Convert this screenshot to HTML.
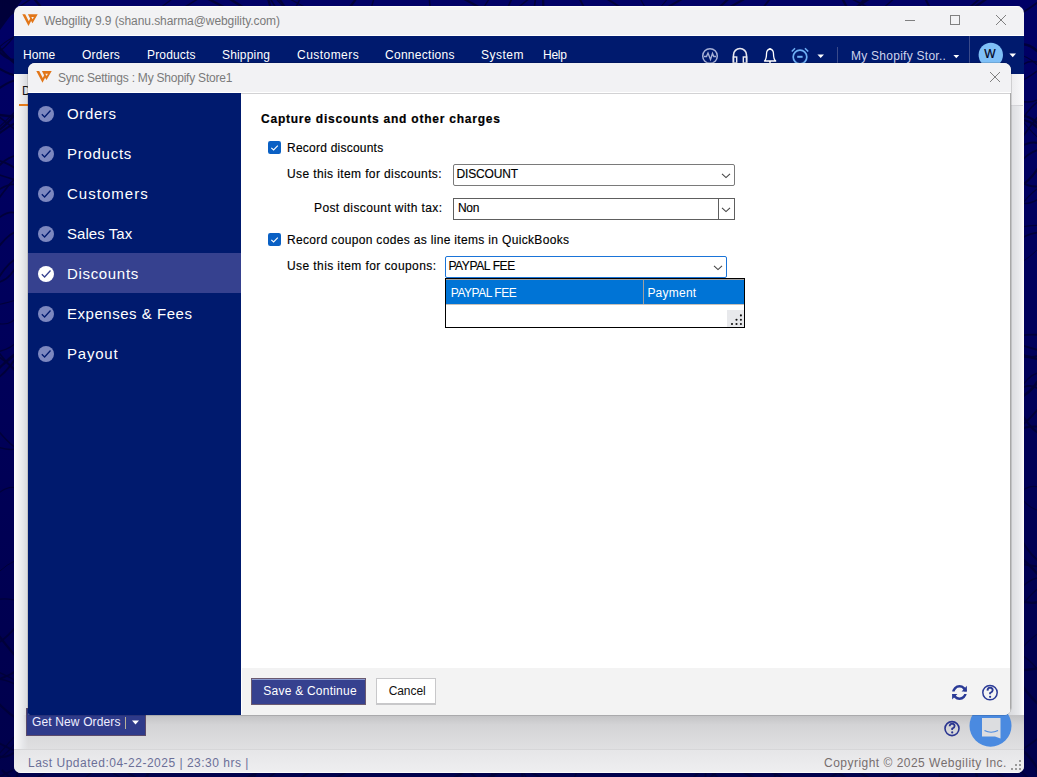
<!DOCTYPE html>
<html><head><meta charset="utf-8">
<style>
*{margin:0;padding:0;box-sizing:border-box}
html,body{width:1037px;height:777px;overflow:hidden;background:#00005c;font-family:"Liberation Sans",sans-serif}
.a{position:absolute}
.t{position:absolute;white-space:nowrap;line-height:1;font-size:12px}
.mn{color:#fff;top:48.6px}
.sb{color:#fff;font-size:15px;left:67px}
.ck{position:absolute;left:38px;width:16px;height:16px}
.lbl{color:#000;-webkit-text-stroke:0.15px #000}
</style></head><body>
<!-- background pattern -->
<svg class="a" style="left:0;top:0" width="1037" height="777">
<defs><linearGradient id="bgg" x1="0" y1="0" x2="0" y2="1"><stop offset="0" stop-color="#000066"/><stop offset="1" stop-color="#00004c"/></linearGradient></defs><rect width="1037" height="777" fill="url(#bgg)"/>
<polygon points="0,30 22,0 0,0" fill="#00003a"/>
<path d="M-5.0,251.6 Q8.5,232.6 19.0,230.7" stroke="#00003a" stroke-width="1.8" fill="none"/>
<path d="M-5.0,284.1 Q7.1,261.6 19.0,257.6" stroke="#00003a" stroke-width="1.7" fill="none"/>
<path d="M-5.0,54.3 Q6.2,48.5 19.0,29.7" stroke="#00003a" stroke-width="1.2" fill="none"/>
<path d="M-5.0,173.5 Q11.5,178.8 19.0,181.1" stroke="#00003a" stroke-width="1.6" fill="none"/>
<path d="M-5.0,758.6 Q10.6,740.7 19.0,731.3" stroke="#00003a" stroke-width="1.2" fill="none"/>
<path d="M-5.0,91.5 Q10.2,79.4 19.0,80.0" stroke="#00003a" stroke-width="1.9" fill="none"/>
<path d="M-5.0,496.4 Q7.5,483.9 19.0,488.8" stroke="#00003a" stroke-width="1.1" fill="none"/>
<path d="M-5.0,160.0 Q6.3,161.7 19.0,170.9" stroke="#00003a" stroke-width="1.9" fill="none"/>
<path d="M-5.0,352.1 Q9.9,350.1 19.0,340.1" stroke="#00003a" stroke-width="1.4" fill="none"/>
<path d="M-5.0,446.3 Q10.8,451.7 19.0,447.8" stroke="#00003a" stroke-width="1.4" fill="none"/>
<path d="M-5.0,761.6 Q6.2,755.3 19.0,738.7" stroke="#00003a" stroke-width="1.2" fill="none"/>
<path d="M-5.0,379.9 Q8.7,371.4 19.0,352.3" stroke="#00003a" stroke-width="1.9" fill="none"/>
<path d="M-5.0,680.2 Q9.0,676.5 19.0,669.1" stroke="#00003a" stroke-width="1.9" fill="none"/>
<path d="M-5.0,354.5 Q11.4,364.2 19.0,374.9" stroke="#00003a" stroke-width="2.0" fill="none"/>
<path d="M-5.0,47.1 Q8.5,63.0 19.0,59.2" stroke="#00003a" stroke-width="2.2" fill="none"/>
<path d="M-5.0,221.1 Q8.7,208.2 19.0,214.3" stroke="#00003a" stroke-width="1.7" fill="none"/>
<path d="M-5.0,130.6 Q2.6,124.5 19.0,107.6" stroke="#00003a" stroke-width="1.2" fill="none"/>
<path d="M-5.0,192.4 Q10.7,180.7 19.0,185.9" stroke="#00003a" stroke-width="1.7" fill="none"/>
<path d="M-5.0,426.9 Q10.2,445.7 19.0,449.9" stroke="#00003a" stroke-width="1.4" fill="none"/>
<path d="M-5.0,322.7 Q10.8,327.6 19.0,314.2" stroke="#00003a" stroke-width="1.2" fill="none"/>
<path d="M-5.0,136.9 Q4.3,128.6 19.0,120.8" stroke="#00003a" stroke-width="1.9" fill="none"/>
<path d="M-5.0,204.2 Q6.2,186.7 19.0,174.4" stroke="#00003a" stroke-width="1.8" fill="none"/>
<path d="M-5.0,740.6 Q7.2,748.6 19.0,752.0" stroke="#00003a" stroke-width="2.0" fill="none"/>
<path d="M-5.0,42.0 Q9.8,61.4 19.0,65.9" stroke="#00003a" stroke-width="2.2" fill="none"/>
<path d="M-5.0,304.9 Q3.0,304.5 19.0,298.8" stroke="#00003a" stroke-width="1.1" fill="none"/>
<path d="M-5.0,52.3 Q3.6,40.4 19.0,34.9" stroke="#00003a" stroke-width="1.1" fill="none"/>
<path d="M-5.0,0.2 Q3.0,-13.0 19.0,-20.7" stroke="#00003a" stroke-width="1.0" fill="none"/>
<path d="M-5.0,679.4 Q3.5,677.8 19.0,686.2" stroke="#00003a" stroke-width="1.5" fill="none"/>
<path d="M-5.0,283.0 Q10.5,281.5 19.0,260.3" stroke="#00003a" stroke-width="1.7" fill="none"/>
<path d="M-5.0,375.9 Q3.0,360.4 19.0,351.1" stroke="#00003a" stroke-width="1.4" fill="none"/>
<path d="M-5.0,644.0 Q2.2,642.9 19.0,623.7" stroke="#00003a" stroke-width="1.8" fill="none"/>
<path d="M-5.0,113.9 Q2.3,115.8 19.0,116.5" stroke="#00003a" stroke-width="2.5" fill="none"/>
<path d="M-5.0,670.8 Q4.6,674.0 19.0,682.6" stroke="#00003a" stroke-width="1.3" fill="none"/>
<path d="M-5.0,599.8 Q9.8,597.4 19.0,601.8" stroke="#00003a" stroke-width="1.3" fill="none"/>
<path d="M-5.0,630.5 Q10.5,651.2 19.0,659.6" stroke="#00003a" stroke-width="2.2" fill="none"/>
<path d="M-5.0,574.9 Q7.2,563.8 19.0,558.5" stroke="#00003a" stroke-width="1.0" fill="none"/>
<path d="M-5.0,21.7 Q4.6,18.9 19.0,8.5" stroke="#00003a" stroke-width="2.4" fill="none"/>
<path d="M-5.0,347.5 Q11.9,369.7 19.0,373.7" stroke="#00003a" stroke-width="1.5" fill="none"/>
<path d="M-5.0,171.3 Q4.0,157.2 19.0,154.9" stroke="#00003a" stroke-width="1.9" fill="none"/>
<path d="M-5.0,699.5 Q6.8,712.8 19.0,720.0" stroke="#00003a" stroke-width="2.2" fill="none"/>
<path d="M-5.0,65.9 Q11.1,76.3 19.0,75.5" stroke="#00003a" stroke-width="2.1" fill="none"/>
<path d="M-5.0,371.4 Q9.9,358.4 19.0,352.1" stroke="#00003a" stroke-width="2.2" fill="none"/>
<path d="M-5.0,755.0 Q6.0,760.8 19.0,748.7" stroke="#00003a" stroke-width="2.1" fill="none"/>
<path d="M-5.0,132.1 Q3.5,129.0 19.0,109.7" stroke="#00003a" stroke-width="2.2" fill="none"/>
<path d="M-5.0,113.6 Q11.8,126.5 19.0,133.2" stroke="#00003a" stroke-width="1.5" fill="none"/>
<path d="M1019.0,426.3 Q1025.6,424.7 1042.0,404.2" stroke="#00003a" stroke-width="2.0" fill="none"/>
<path d="M1019.0,409.2 Q1029.8,429.6 1042.0,435.2" stroke="#00003a" stroke-width="2.2" fill="none"/>
<path d="M1019.0,164.0 Q1028.4,151.3 1042.0,149.1" stroke="#00003a" stroke-width="1.9" fill="none"/>
<path d="M1019.0,201.5 Q1026.8,207.3 1042.0,196.7" stroke="#00003a" stroke-width="1.5" fill="none"/>
<path d="M1019.0,356.0 Q1034.5,356.9 1042.0,361.0" stroke="#00003a" stroke-width="2.4" fill="none"/>
<path d="M1019.0,389.8 Q1030.7,381.1 1042.0,391.7" stroke="#00003a" stroke-width="1.7" fill="none"/>
<path d="M1019.0,142.3 Q1033.5,120.8 1042.0,112.5" stroke="#00003a" stroke-width="1.7" fill="none"/>
<path d="M1019.0,563.5 Q1028.8,565.5 1042.0,566.9" stroke="#00003a" stroke-width="1.8" fill="none"/>
<path d="M1019.0,609.4 Q1031.1,592.5 1042.0,585.7" stroke="#00003a" stroke-width="1.4" fill="none"/>
<path d="M1019.0,600.0 Q1031.1,605.5 1042.0,600.5" stroke="#00003a" stroke-width="2.4" fill="none"/>
<path d="M1019.0,344.4 Q1030.6,348.0 1042.0,351.2" stroke="#00003a" stroke-width="2.0" fill="none"/>
<path d="M1019.0,351.5 Q1030.3,361.3 1042.0,353.5" stroke="#00003a" stroke-width="2.0" fill="none"/>
<path d="M1019.0,681.1 Q1028.1,695.5 1042.0,707.6" stroke="#00003a" stroke-width="2.4" fill="none"/>
<path d="M1019.0,652.7 Q1026.7,640.6 1042.0,630.9" stroke="#00003a" stroke-width="1.1" fill="none"/>
<path d="M1019.0,187.0 Q1032.2,179.8 1042.0,161.4" stroke="#00003a" stroke-width="2.3" fill="none"/>
<path d="M1019.0,120.0 Q1032.1,119.3 1042.0,133.0" stroke="#00003a" stroke-width="2.3" fill="none"/>
<path d="M1019.0,751.8 Q1035.0,741.3 1042.0,735.0" stroke="#00003a" stroke-width="1.7" fill="none"/>
<path d="M1019.0,769.1 Q1027.1,777.7 1042.0,789.1" stroke="#00003a" stroke-width="1.8" fill="none"/>
<path d="M1019.0,263.5 Q1028.7,258.8 1042.0,245.2" stroke="#00003a" stroke-width="1.0" fill="none"/>
<path d="M1019.0,430.5 Q1025.7,425.3 1042.0,426.9" stroke="#00003a" stroke-width="1.9" fill="none"/>
<path d="M1019.0,398.0 Q1035.4,390.7 1042.0,371.9" stroke="#00003a" stroke-width="2.5" fill="none"/>
<path d="M1019.0,81.4 Q1025.9,80.0 1042.0,67.3" stroke="#00003a" stroke-width="1.4" fill="none"/>
<path d="M1019.0,100.7 Q1034.6,104.7 1042.0,96.0" stroke="#00003a" stroke-width="1.4" fill="none"/>
<path d="M1019.0,116.1 Q1031.2,132.6 1042.0,141.2" stroke="#00003a" stroke-width="1.1" fill="none"/>
<path d="M1019.0,44.7 Q1029.8,41.8 1042.0,56.0" stroke="#00003a" stroke-width="2.4" fill="none"/>
<path d="M1019.0,493.0 Q1026.3,509.1 1042.0,511.1" stroke="#00003a" stroke-width="1.1" fill="none"/>
<path d="M1019.0,670.4 Q1028.9,670.1 1042.0,667.6" stroke="#00003a" stroke-width="2.4" fill="none"/>
<path d="M1019.0,208.1 Q1030.8,191.8 1042.0,185.9" stroke="#00003a" stroke-width="1.2" fill="none"/>
<path d="M1019.0,125.4 Q1027.5,108.2 1042.0,98.5" stroke="#00003a" stroke-width="1.5" fill="none"/>
<path d="M1019.0,590.1 Q1030.5,577.4 1042.0,577.5" stroke="#00003a" stroke-width="1.5" fill="none"/>
<path d="M1019.0,14.1 Q1025.7,11.3 1042.0,-0.9" stroke="#00003a" stroke-width="1.8" fill="none"/>
<path d="M1019.0,147.2 Q1034.8,138.6 1042.0,145.7" stroke="#00003a" stroke-width="2.2" fill="none"/>
<path d="M1019.0,335.8 Q1033.8,333.5 1042.0,335.5" stroke="#00003a" stroke-width="1.8" fill="none"/>
<path d="M1019.0,534.4 Q1028.9,555.5 1042.0,563.3" stroke="#00003a" stroke-width="2.1" fill="none"/>
<path d="M1019.0,494.2 Q1029.0,482.4 1042.0,488.4" stroke="#00003a" stroke-width="1.2" fill="none"/>
<path d="M1019.0,55.0 Q1028.1,55.4 1042.0,69.4" stroke="#00003a" stroke-width="1.1" fill="none"/>
<path d="M1019.0,653.7 Q1032.2,660.4 1042.0,675.9" stroke="#00003a" stroke-width="1.4" fill="none"/>
<path d="M1019.0,227.7 Q1027.1,225.4 1042.0,225.3" stroke="#00003a" stroke-width="1.4" fill="none"/>
<path d="M1019.0,747.3 Q1031.0,756.4 1042.0,775.7" stroke="#00003a" stroke-width="2.4" fill="none"/>
<path d="M1019.0,240.5 Q1025.5,233.8 1042.0,231.9" stroke="#00003a" stroke-width="1.7" fill="none"/>
<path d="M1019.0,390.6 Q1030.5,371.8 1042.0,372.7" stroke="#00003a" stroke-width="1.4" fill="none"/>
<path d="M1019.0,69.7 Q1025.9,57.2 1042.0,63.7" stroke="#00003a" stroke-width="1.5" fill="none"/>
<path d="M1019.0,180.9 Q1030.8,188.5 1042.0,186.0" stroke="#00003a" stroke-width="2.0" fill="none"/>
<path d="M1019.0,556.3 Q1029.4,564.2 1042.0,579.1" stroke="#00003a" stroke-width="2.5" fill="none"/>
<path d="M1019.0,116.1 Q1031.9,113.7 1042.0,129.6" stroke="#00003a" stroke-width="2.3" fill="none"/>
<path d="M924.9,-2 L930.0,8" stroke="#00003a" stroke-width="2.1" fill="none"/>
<path d="M842.3,770 L827.8,779" stroke="#00003a" stroke-width="2.1" fill="none"/>
<path d="M543.1,-2 L543.3,8" stroke="#00003a" stroke-width="2.3" fill="none"/>
<path d="M834.5,770 L847.5,779" stroke="#00003a" stroke-width="2.3" fill="none"/>
<path d="M605.7,-2 L621.4,8" stroke="#00003a" stroke-width="2.0" fill="none"/>
<path d="M719.0,770 L708.2,779" stroke="#00003a" stroke-width="2.0" fill="none"/>
<path d="M32.3,-2 L17.6,8" stroke="#00003a" stroke-width="1.5" fill="none"/>
<path d="M108.8,770 L122.2,779" stroke="#00003a" stroke-width="1.5" fill="none"/>
<path d="M579.2,-2 L584.3,8" stroke="#00003a" stroke-width="1.9" fill="none"/>
<path d="M705.8,770 L705.4,779" stroke="#00003a" stroke-width="1.9" fill="none"/>
<path d="M3.4,-2 L15.3,8" stroke="#00003a" stroke-width="2.1" fill="none"/>
<path d="M521.6,770 L523.0,779" stroke="#00003a" stroke-width="2.1" fill="none"/>
<path d="M683.7,-2 L666.3,8" stroke="#00003a" stroke-width="2.1" fill="none"/>
<path d="M261.5,770 L244.5,779" stroke="#00003a" stroke-width="2.1" fill="none"/>
<path d="M275.4,-2 L284.6,8" stroke="#00003a" stroke-width="1.3" fill="none"/>
<path d="M767.2,770 L786.2,779" stroke="#00003a" stroke-width="1.3" fill="none"/>
<path d="M512.2,-2 L507.5,8" stroke="#00003a" stroke-width="1.7" fill="none"/>
<path d="M709.0,770 L719.7,779" stroke="#00003a" stroke-width="1.7" fill="none"/>
<path d="M639.8,-2 L645.5,8" stroke="#00003a" stroke-width="1.1" fill="none"/>
<path d="M152.9,770 L143.0,779" stroke="#00003a" stroke-width="1.1" fill="none"/>
<path d="M770.7,-2 L762.9,8" stroke="#00003a" stroke-width="1.9" fill="none"/>
<path d="M12.9,770 L-4.6,779" stroke="#00003a" stroke-width="1.9" fill="none"/>
<path d="M278.7,-2 L285.6,8" stroke="#00003a" stroke-width="2.0" fill="none"/>
<path d="M700.7,770 L692.3,779" stroke="#00003a" stroke-width="2.0" fill="none"/>
<path d="M535.6,-2 L534.2,8" stroke="#00003a" stroke-width="1.7" fill="none"/>
<path d="M122.9,770 L138.6,779" stroke="#00003a" stroke-width="1.7" fill="none"/>
<path d="M206.6,-2 L225.7,8" stroke="#00003a" stroke-width="2.4" fill="none"/>
<path d="M18.2,770 L16.5,779" stroke="#00003a" stroke-width="2.4" fill="none"/>
<path d="M850.2,-2 L869.0,8" stroke="#00003a" stroke-width="1.7" fill="none"/>
<path d="M278.6,770 L267.0,779" stroke="#00003a" stroke-width="1.7" fill="none"/>
<path d="M980.6,-2 L969.0,8" stroke="#00003a" stroke-width="1.9" fill="none"/>
<path d="M147.0,770 L147.9,779" stroke="#00003a" stroke-width="1.9" fill="none"/>
<path d="M988.0,-2 L973.3,8" stroke="#00003a" stroke-width="2.2" fill="none"/>
<path d="M527.6,770 L543.0,779" stroke="#00003a" stroke-width="2.2" fill="none"/>
<path d="M729.4,-2 L718.6,8" stroke="#00003a" stroke-width="2.3" fill="none"/>
<path d="M504.1,770 L485.1,779" stroke="#00003a" stroke-width="2.3" fill="none"/>
<path d="M3.7,-2 L3.4,8" stroke="#00003a" stroke-width="1.7" fill="none"/>
<path d="M313.1,770 L298.8,779" stroke="#00003a" stroke-width="1.7" fill="none"/>
<path d="M356.7,-2 L349.3,8" stroke="#00003a" stroke-width="2.3" fill="none"/>
<path d="M1.8,770 L11.8,779" stroke="#00003a" stroke-width="2.3" fill="none"/>
<path d="M870.2,-2 L855.0,8" stroke="#00003a" stroke-width="2.4" fill="none"/>
<path d="M739.4,770 L755.5,779" stroke="#00003a" stroke-width="2.4" fill="none"/>
<path d="M300.6,-2 L295.4,8" stroke="#00003a" stroke-width="1.6" fill="none"/>
<path d="M1035.7,770 L1039.3,779" stroke="#00003a" stroke-width="1.6" fill="none"/>
<path d="M374.1,-2 L371.2,8" stroke="#00003a" stroke-width="1.4" fill="none"/>
<path d="M50.1,770 L34.1,779" stroke="#00003a" stroke-width="1.4" fill="none"/>
<path d="M865.6,-2 L857.0,8" stroke="#00003a" stroke-width="2.4" fill="none"/>
<path d="M258.5,770 L249.2,779" stroke="#00003a" stroke-width="2.4" fill="none"/>
<path d="M529.9,-2 L517.5,8" stroke="#00003a" stroke-width="1.6" fill="none"/>
<path d="M991.5,770 L1006.9,779" stroke="#00003a" stroke-width="1.6" fill="none"/>
<path d="M842.0,-2 L847.2,8" stroke="#00003a" stroke-width="2.4" fill="none"/>
<path d="M975.5,770 L977.5,779" stroke="#00003a" stroke-width="2.4" fill="none"/>
<path d="M746.2,-2 L728.2,8" stroke="#00003a" stroke-width="2.1" fill="none"/>
<path d="M467.5,770 L477.6,779" stroke="#00003a" stroke-width="2.1" fill="none"/>
<path d="M668.3,-2 L659.8,8" stroke="#00003a" stroke-width="1.1" fill="none"/>
<path d="M961.1,770 L946.2,779" stroke="#00003a" stroke-width="1.1" fill="none"/>
<path d="M489.7,-2 L483.4,8" stroke="#00003a" stroke-width="1.4" fill="none"/>
<path d="M766.4,770 L785.4,779" stroke="#00003a" stroke-width="1.4" fill="none"/>
<path d="M269.8,-2 L276.0,8" stroke="#00003a" stroke-width="1.5" fill="none"/>
<path d="M577.9,770 L573.7,779" stroke="#00003a" stroke-width="1.5" fill="none"/>
<path d="M173.5,-2 L160.0,8" stroke="#00003a" stroke-width="1.3" fill="none"/>
<path d="M939.5,770 L939.4,779" stroke="#00003a" stroke-width="1.3" fill="none"/>
<path d="M228.2,-2 L244.4,8" stroke="#00003a" stroke-width="2.5" fill="none"/>
<path d="M466.6,770 L452.2,779" stroke="#00003a" stroke-width="2.5" fill="none"/>
<path d="M199.5,-2 L183.2,8" stroke="#00003a" stroke-width="1.5" fill="none"/>
<path d="M94.5,770 L84.0,779" stroke="#00003a" stroke-width="1.5" fill="none"/>
<path d="M267.9,-2 L270.7,8" stroke="#00003a" stroke-width="2.3" fill="none"/>
<path d="M777.4,770 L773.9,779" stroke="#00003a" stroke-width="2.3" fill="none"/>
<path d="M429.2,-2 L430.2,8" stroke="#00003a" stroke-width="1.6" fill="none"/>
<path d="M350.7,770 L333.2,779" stroke="#00003a" stroke-width="1.6" fill="none"/>
<path d="M287.8,-2 L306.5,8" stroke="#00003a" stroke-width="1.2" fill="none"/>
<path d="M522.0,770 L527.2,779" stroke="#00003a" stroke-width="1.2" fill="none"/>
<path d="M894.8,-2 L883.4,8" stroke="#00003a" stroke-width="1.4" fill="none"/>
<path d="M257.6,770 L253.6,779" stroke="#00003a" stroke-width="1.4" fill="none"/>
<path d="M462.4,-2 L480.5,8" stroke="#00003a" stroke-width="2.3" fill="none"/>
<path d="M905.2,770 L886.1,779" stroke="#00003a" stroke-width="2.3" fill="none"/>
<path d="M33.4,-2 L41.8,8" stroke="#00003a" stroke-width="2.3" fill="none"/>
<path d="M490.8,770 L494.3,779" stroke="#00003a" stroke-width="2.3" fill="none"/>
<path d="M0.2,-2 L-4.2,8" stroke="#00003a" stroke-width="2.4" fill="none"/>
<path d="M856.1,770 L870.4,779" stroke="#00003a" stroke-width="2.4" fill="none"/>
</svg>

<!-- ============ outer window ============ -->
<div class="a" style="left:14px;top:6px;width:1010px;height:767px;background:#f2f2f4;border-radius:7px;overflow:hidden">
  <div class="a" style="left:0;top:29px;width:1010px;height:1px;background:#fff"></div>
  <div class="a" style="left:0;top:0;width:1010px;height:1px;background:#fbfbfc"></div>
  <div class="a" style="left:0;top:30px;width:1010px;height:38px;background:#001a6e"></div>
  <div class="a" style="left:0;top:68px;width:1010px;height:675px;background:linear-gradient(90deg,#fdfdfd 0,#e6e7ea 9px,#dcdde0 12px)"></div>
  <div class="a" style="left:997px;top:68px;width:13px;height:675px;background:linear-gradient(90deg,#dcdde0 0,#e8e9ec 8px,#fdfdfd 13px)"></div>
  <div class="a" style="left:997px;top:68px;width:13px;height:32px;background:linear-gradient(90deg,#ececee 0,#f4f4f6 8px,#fdfdfd 13px)"></div>
  <div class="a" style="left:0;top:709px;width:1010px;height:34px;background:linear-gradient(180deg,#c2c2c4 0,#d4d4d6 10px,#e0e0e2 34px)"></div>
  <div class="a" style="left:0;top:709px;width:14px;height:34px;background:linear-gradient(90deg,#fdfdfd 0,#e6e7ea 9px,rgba(220,221,224,0) 14px)"></div>
  <div class="a" style="left:0;top:743px;width:1010px;height:24px;background:linear-gradient(180deg,#e6e6e8,#eeeef0);border-top:1px solid #d6d6d8;border-bottom:1px solid #fafafa"></div>
</div>
<!-- title bar -->
<svg class="a" style="left:0;top:0" width="60" height="34">
<polygon points="22.3,14.3 25.2,14.3 28.8,21.2 30.1,18.5 27.9,14.3 37.7,14.3 32.5,23.3 31.1,21 28.5,25.9" fill="#e27618"/>
<polygon points="31.3,17 33.9,17 32.6,19.3" fill="#f2f2f4"/>
</svg>
<div class="t" style="left:44px;top:14.7px;color:#7a7a7a;letter-spacing:-0.08px">Webgility 9.9 (shanu.sharma@webgility.com)</div>
<svg class="a" style="left:900px;top:10px" width="115" height="20">
<line x1="5" y1="10.5" x2="15" y2="10.5" stroke="#808080" stroke-width="1"/>
<rect x="50.5" y="5.5" width="9" height="9" fill="none" stroke="#808080" stroke-width="1"/>
<line x1="96" y1="5" x2="106" y2="15" stroke="#808080" stroke-width="1"/>
<line x1="106" y1="5" x2="96" y2="15" stroke="#808080" stroke-width="1"/>
</svg>
<!-- menu -->
<div class="t mn" style="left:23px;letter-spacing:0.07px">Home</div>
<div class="t mn" style="left:82px;letter-spacing:0.24px">Orders</div>
<div class="t mn" style="left:147px;letter-spacing:0.17px">Products</div>
<div class="t mn" style="left:222px;letter-spacing:0.17px">Shipping</div>
<div class="t mn" style="left:297px;letter-spacing:0.46px">Customers</div>
<div class="t mn" style="left:385px;letter-spacing:0.28px">Connections</div>
<div class="t mn" style="left:481px;letter-spacing:0.48px">System</div>
<div class="t mn" style="left:543px;letter-spacing:-0.27px">Help</div>
<svg class="a" style="left:690px;top:40px" width="335" height="34">
<!-- pulse -->
<circle cx="20" cy="16" r="7.3" fill="none" stroke="#a6b0d6" stroke-width="1.5"/>
<polyline points="14,16.5 16.5,16.5 18,13 20.5,19.5 22.5,13.5 23.8,16.5 26,16.5" fill="none" stroke="#a6b0d6" stroke-width="1.4"/>
<!-- headphones -->
<path d="M43.5,23 V15 A6.5,6.5 0 0 1 56.5,15 V23" fill="none" stroke="#e8e8f0" stroke-width="1.6"/>
<rect x="43.3" y="17" width="3.4" height="6" fill="none" stroke="#e8e8f0" stroke-width="1.4"/>
<rect x="53.3" y="17" width="3.4" height="6" fill="none" stroke="#e8e8f0" stroke-width="1.4"/>
<!-- bell -->
<path d="M74.5,21 Q76.5,19 76.5,14 Q76.5,9.5 80,9 Q83.5,9.5 83.5,14 Q83.5,19 85.7,21 Z" fill="none" stroke="#fff" stroke-width="1.3" stroke-linejoin="round"/>
<line x1="80" y1="8" x2="80" y2="9" stroke="#fff" stroke-width="1.3"/><line x1="80" y1="21" x2="80" y2="23" stroke="#fff" stroke-width="1.6"/>
<!-- alarm -->
<circle cx="110" cy="17" r="6.8" fill="none" stroke="#6eb0f5" stroke-width="1.7"/>
<line x1="107.2" y1="16.8" x2="112.6" y2="16.8" stroke="#6eb0f5" stroke-width="2"/>
<line x1="101.8" y1="11.5" x2="105" y2="8.2" stroke="#6eb0f5" stroke-width="1.5"/>
<line x1="118.2" y1="11.5" x2="115" y2="8.2" stroke="#6eb0f5" stroke-width="1.5"/>
<polygon points="127.4,14.5 134,14.5 130.7,18" fill="#fff"/>
<line x1="147.5" y1="7" x2="147.5" y2="34" stroke="#3a4a8a" stroke-width="1"/>
<polygon points="263.4,15 269.2,15 266.3,18.3" fill="#fff"/>

<circle cx="300.8" cy="15" r="12.2" fill="#7fc0f7"/>
<polygon points="319.4,13.6 326,13.6 322.7,17.2" fill="#fff"/>
</svg>
<div class="a" style="left:969px;top:36px;width:1px;height:38px;background:#3a4a8a"></div>
<div class="t" style="left:851px;top:50px;color:#cdd2ec;letter-spacing:0.26px">My Shopify Stor..</div>
<div class="t" style="left:984.3px;top:48.4px;color:#00001a;font-size:12px;-webkit-text-stroke:0.2px #00001a">W</div>

<!-- outer window body bits -->
<div class="t" style="left:22px;top:85px;color:#111;font-size:12px">D</div>
<div class="a" style="left:19px;top:104px;width:10px;height:2px;background:#e47a1a"></div>
<div class="a" style="left:1011px;top:105px;width:12px;height:1px;background:#d4d4d8"></div>

<!-- get new orders -->
<div class="a" style="left:26px;top:708px;width:120px;height:28px;background:#2e3a8a;border:1px solid #5a4a6a"></div>
<div class="t" style="left:32px;top:716px;color:#eef;letter-spacing:0.14px">Get New Orders</div>
<div class="a" style="left:125px;top:717px;width:1px;height:12px;background:#b8b098"></div>
<svg class="a" style="left:130px;top:719px" width="12" height="8"><polygon points="2,1.5 9,1.5 5.5,5.5" fill="#fff"/></svg>

<!-- help + chat -->
<svg class="a" style="left:940px;top:700px" width="84" height="50">
<circle cx="12" cy="28.6" r="7" fill="none" stroke="#2a3590" stroke-width="1.6"/>
<path d="M9.6,26.3 Q9.8,23.6 12.2,23.6 Q14.6,23.7 14.6,26 Q14.6,27.5 12.2,28.6 V30" fill="none" stroke="#2a3590" stroke-width="1.8"/>
<circle cx="12.2" cy="32.4" r="1.1" fill="#2a3590"/>
<circle cx="50.5" cy="25.7" r="21" fill="#4a8ae0"/>
<path d="M42,18 H60.5 V38.5 L55,36.5 H42 Z" fill="#dcdde0"/>
<path d="M44.5,30.5 Q51,34 58,30.5" fill="none" stroke="#4a8ae0" stroke-width="1.2"/>
</svg>

<!-- status bar -->
<div class="t" style="left:28px;top:756.6px;color:#6b6f98;letter-spacing:0.5px">Last Updated:04-22-2025 | 23:30 hrs |</div>
<div class="t" style="left:824px;top:756.6px;color:#776e6e;letter-spacing:0.48px">Copyright © 2025 Webgility Inc.</div>
<svg class="a" style="left:1007px;top:758px" width="18" height="14">
<g fill="#9a9a9a"><rect x="12" y="2" width="2" height="2"/><rect x="8" y="6" width="2" height="2"/><rect x="12" y="6" width="2" height="2"/><rect x="4" y="10" width="2" height="2"/><rect x="8" y="10" width="2" height="2"/><rect x="12" y="10" width="2" height="2"/></g>
</svg>

<!-- ============ dialog ============ -->
<div class="a" style="left:28px;top:63px;width:983px;height:652px;background:#fff;border-radius:7px 7px 7px 2px;overflow:hidden;box-shadow:0 0 0 0.5px rgba(0,0,0,0.25)">
  <div class="a" style="left:0;top:0;width:983px;height:30px;background:#f2f2f4;border-bottom:1px solid #fff"></div>
  <div class="a" style="left:213px;top:30px;width:770px;height:1px;background:#d2d2d4"></div>
  <div class="a" style="left:0;top:30px;width:213px;height:622px;background:#001a6e"></div>
  <div class="a" style="left:0;top:190px;width:213px;height:40px;background:#36418f"></div>
  <div class="a" style="left:214px;top:605px;width:769px;height:47px;background:#f3f3f3"></div>
  <div class="a" style="left:982px;top:30px;width:1px;height:622px;background:#a8a8a8"></div>
</div>
<svg class="a" style="left:0;top:56px" width="60" height="34">
<g transform="translate(14,0.8)">
<polygon points="22.3,14.3 25.2,14.3 28.8,21.2 30.1,18.5 27.9,14.3 37.7,14.3 32.5,23.3 31.1,21 28.5,25.9" fill="#e27618"/>
<polygon points="31.3,17 33.9,17 32.6,19.3" fill="#f2f2f4"/>
</g>
</svg>
<div class="t" style="left:58px;top:72px;color:#7a7a7a;letter-spacing:-0.22px">Sync Settings : My Shopify Store1</div>
<svg class="a" style="left:985px;top:67px" width="20" height="20">
<line x1="5" y1="5" x2="15" y2="15" stroke="#808080" stroke-width="1"/>
<line x1="15" y1="5" x2="5" y2="15" stroke="#808080" stroke-width="1"/>
</svg>

<!-- sidebar -->
<svg class="a" style="left:0;top:93px" width="60" height="280">
<g fill="#7d88c0">
<circle cx="46" cy="21" r="8"/><circle cx="46" cy="61" r="8"/><circle cx="46" cy="101" r="8"/><circle cx="46" cy="141" r="8"/><circle cx="46" cy="221" r="8"/><circle cx="46" cy="261" r="8"/>
</g>
<circle cx="46" cy="181" r="8" fill="#fff"/>
<g fill="none" stroke="#001a6e" stroke-width="1.3">
<polyline points="41.8,21.3 44.6,24 50.5,17.5"/><polyline points="41.8,61.3 44.6,64 50.5,57.5"/><polyline points="41.8,101.3 44.6,104 50.5,97.5"/><polyline points="41.8,141.3 44.6,144 50.5,137.5"/><polyline points="41.8,221.3 44.6,224 50.5,217.5"/><polyline points="41.8,261.3 44.6,264 50.5,257.5"/>
</g>
<polyline points="41.8,181.3 44.6,184 50.5,177.5" fill="none" stroke="#36418f" stroke-width="1.3"/>
</svg>
<div class="t sb" style="top:106.1px;letter-spacing:0.64px">Orders</div>
<div class="t sb" style="top:146.1px;letter-spacing:0.73px">Products</div>
<div class="t sb" style="top:186.1px;letter-spacing:1.02px">Customers</div>
<div class="t sb" style="top:226.1px;letter-spacing:0.06px">Sales Tax</div>
<div class="t sb" style="top:266.1px;letter-spacing:0.67px">Discounts</div>
<div class="t sb" style="top:306.1px;letter-spacing:0.53px">Expenses &amp; Fees</div>
<div class="t sb" style="top:346.1px;letter-spacing:0.78px">Payout</div>

<!-- content -->
<div class="t" style="left:261px;top:113.2px;font-weight:bold;color:#000;-webkit-text-stroke:0.2px #000;letter-spacing:0.77px">Capture discounts and other charges</div>
<svg class="a" style="left:268px;top:141px" width="13" height="13"><rect width="13" height="13" rx="2.2" fill="#0a60c4"/><polyline points="3.3,6.8 5.6,9 9.8,4.6" fill="none" stroke="#fff" stroke-width="1.1"/></svg>
<div class="t lbl" style="left:287px;top:141.8px;letter-spacing:0.23px">Record discounts</div>
<div class="t lbl" style="left:287px;top:168.2px;letter-spacing:0.39px">Use this item for discounts:</div>
<div class="a" style="left:453px;top:164px;width:282px;height:22px;border:1px solid #7a7a7a;border-radius:2px;background:#fff"></div>
<div class="t lbl" style="left:456.5px;top:168.2px;letter-spacing:-0.17px">DISCOUNT</div>
<svg class="a" style="left:718px;top:168px" width="16" height="14"><polyline points="4,5.8 8,9.6 12,5.8" fill="none" stroke="#444" stroke-width="1.1"/></svg>

<div class="t lbl" style="left:314px;top:202px;letter-spacing:0.39px">Post discount with tax:</div>
<div class="a" style="left:453px;top:198px;width:282px;height:22px;border:1px solid #5e5e5e;background:#fff"></div>
<div class="a" style="left:718px;top:198px;width:1px;height:22px;background:#5e5e5e"></div>
<div class="t lbl" style="left:458px;top:202.2px;letter-spacing:-0.35px">Non</div>
<svg class="a" style="left:718px;top:202px" width="16" height="14"><polyline points="4,5.8 8,9.6 12,5.8" fill="none" stroke="#444" stroke-width="1.1"/></svg>

<svg class="a" style="left:268px;top:233px" width="13" height="13"><rect width="13" height="13" rx="2.2" fill="#0a60c4"/><polyline points="3.3,6.8 5.6,9 9.8,4.6" fill="none" stroke="#fff" stroke-width="1.1"/></svg>
<div class="t lbl" style="left:287px;top:234px;letter-spacing:0.33px">Record coupon codes as line items in QuickBooks</div>
<div class="t lbl" style="left:287px;top:260px;letter-spacing:0.41px">Use this item for coupons:</div>
<div class="a" style="left:445px;top:256px;width:282px;height:22px;border:1px solid #1a74d8;border-radius:2px;background:#fff"></div>
<div class="t lbl" style="left:448.4px;top:259.5px;letter-spacing:-0.38px">PAYPAL FEE</div>
<svg class="a" style="left:710px;top:260px" width="16" height="14"><polyline points="4,5.8 8,9.6 12,5.8" fill="none" stroke="#444" stroke-width="1.1"/></svg>

<!-- popup -->
<div class="a" style="left:445px;top:278px;width:300px;height:50px;border:1px solid #000;background:#fff"></div>
<div class="a" style="left:446px;top:279px;width:298px;height:26px;background:#0074d6;border-top:1px solid #a0a0a0;border-bottom:1px solid #c8c0b8"></div>
<div class="a" style="left:643px;top:280px;width:1px;height:24px;background:#a0a0a0"></div>
<div class="t" style="left:450.8px;top:287.3px;color:#fff;letter-spacing:-0.48px">PAYPAL FEE</div>
<div class="t" style="left:647.4px;top:287.3px;color:#fff;letter-spacing:0.23px">Payment</div>
<svg class="a" style="left:727px;top:310px" width="17" height="17">
<rect width="17" height="17" fill="#e8e9ec"/>
<g fill="#111"><circle cx="13.9" cy="5.4" r="1.05"/><circle cx="9.5" cy="9.7" r="1.05"/><circle cx="13.9" cy="9.7" r="1.05"/><circle cx="5" cy="14" r="1.05"/><circle cx="9.5" cy="14" r="1.05"/><circle cx="13.9" cy="14" r="1.05"/></g>
</svg>

<!-- footer -->
<div class="a" style="left:251px;top:678px;width:115px;height:27px;background:#36418f;border:1px solid #6a5a70;box-shadow:inset 0 1px 0 #8a9ad0"></div>
<div class="t" style="left:263.3px;top:684.8px;color:#fff;letter-spacing:0.23px">Save &amp; Continue</div>
<div class="a" style="left:376px;top:678px;width:60px;height:27px;background:#fff;border:1px solid #c8c8ca;border-bottom-width:2px"></div>
<div class="t" style="left:388.7px;top:684.8px;color:#111;letter-spacing:-0.08px">Cancel</div>
<svg class="a" style="left:945px;top:678px" width="60" height="30">
<defs><clipPath id="rc"><rect x="0" y="0" width="30" height="10.4"/><rect x="0" y="13" width="30" height="17"/></clipPath></defs>
<g transform="translate(3,3)" fill="#2a3a96">
<circle cx="11.5" cy="11.5" r="6.15" fill="none" stroke="#2a3a96" stroke-width="2.5" clip-path="url(#rc)"/>
<polygon points="18.9,4.8 18.9,10.4 13.6,10.4"/>
<polygon points="4.1,18.6 4.1,13 9.4,13"/>
</g>
<circle cx="45" cy="14.6" r="7.2" fill="none" stroke="#2a3a96" stroke-width="1.5"/>
<path d="M42.5,12.6 Q42.6,9.6 45.1,9.6 Q47.7,9.7 47.7,12.2 Q47.6,13.8 45.1,15 V16.3" fill="none" stroke="#2a3a96" stroke-width="1.9"/>
<circle cx="45.1" cy="18.8" r="1.1" fill="#2a3a96"/>
</svg>
</body></html>
